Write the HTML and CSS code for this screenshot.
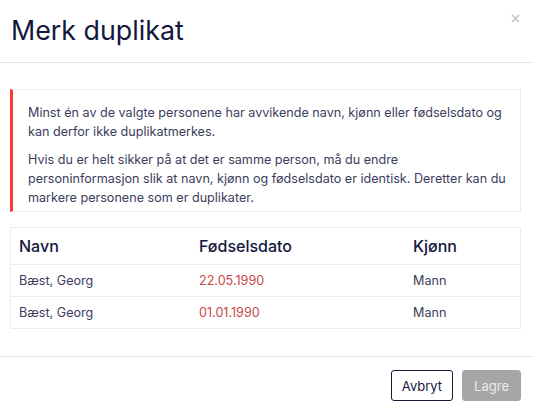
FILE: index.html
```html
<!DOCTYPE html>
<html lang="no">
<head>
  <meta charset="UTF-8">
  <title>Merk duplikat</title>
  <meta name="viewport" content="width=device-width, initial-scale=1.0">
  <link rel="stylesheet" href="styles.css">
</head>
<body>
  <div class="modal">
    <div class="modal-header">
      <h2 class="modal-title">Merk duplikat</h2>
      <button class="close" aria-label="Lukk">
        <svg width="9" height="9" viewBox="0 0 9 9"><path d="M1 1L8 8M8 1L1 8" stroke="#c4c4c4" stroke-width="1.6"/></svg>
      </button>
    </div>
    <div class="modal-body">
      <div class="alert">
        <p>Minst én av de valgte personene har avvikende navn, kjønn eller fødselsdato og kan derfor ikke duplikatmerkes.</p>
        <p>Hvis du er helt sikker på at det er samme person, må du endre personinformasjon slik at navn, kjønn og fødselsdato er identisk. Deretter kan du markere personene som er duplikater.</p>
      </div>
      <table class="persons">
        <thead>
          <tr>
            <th class="col-name">Navn</th>
            <th class="col-date">Fødselsdato</th>
            <th>Kjønn</th>
          </tr>
        </thead>
        <tbody>
          <tr>
            <td>Bæst, Georg</td>
            <td class="mismatch">22.05.1990</td>
            <td>Mann</td>
          </tr>
          <tr>
            <td>Bæst, Georg</td>
            <td class="mismatch">01.01.1990</td>
            <td>Mann</td>
          </tr>
        </tbody>
      </table>
    </div>
    <div class="modal-footer">
      <button class="btn btn-outline">Avbryt</button>
      <button class="btn btn-disabled" disabled>Lagre</button>
    </div>
  </div>
</body>
</html>
```

FILE: styles.css
```css
body {
  margin: 0;
  background: #fff;
  font-family: Inter, 'Noto Sans', Arial, sans-serif;
  color: #3b3d5c;
}
.modal {
  width: 533px;
  height: 411px;
  display: flex;
  flex-direction: column;
}
.modal-header {
  display: flex;
  justify-content: space-between;
  align-items: flex-start;
  padding: 15px 13px 16px 11px;
  border-bottom: 1px solid #e6e6e6;
}
.modal-title {
  margin: 0;
  font-size: 26.8px;
  line-height: 31px;
  font-weight: 400;
  color: #14173d;
}
.close {
  background: none;
  border: none;
  padding: 0;
  margin-top: -1px;
  cursor: pointer;
  line-height: 0;
}
.modal-body {
  padding: 26px 12px 0 10px;
}
.alert {
  border: 1px solid #ececec;
  border-left: 3px solid #ff3b30;
  padding: 13px 12px 4px 15px;
  font-size: 12.6px;
  line-height: 19px;
  color: #3b3d5c;
}
.alert p {
  margin: 0 0 9px 0;
}
.alert p:last-child {
  margin-bottom: 0;
}
.persons {
  width: 100%;
  margin-top: 15px;
  border-collapse: collapse;
  border: 1px solid #ececec;
}
.persons th {
  text-align: left;
  font-size: 16px;
  font-weight: 500;
  color: #14173d;
  height: 36px;
  padding: 0 8px;
  border-bottom: 1px solid #ececec;
}
.persons td {
  font-size: 12.6px;
  height: 31px;
  padding: 0 8px;
  border-bottom: 1px solid #ececec;
  color: #3b3d5c;
}
.col-name {
  width: 164px;
}
.col-date {
  width: 198px;
}
.persons td.mismatch {
  color: #c6474a;
}
.modal-footer {
  margin-top: auto;
  display: flex;
  justify-content: flex-end;
  gap: 9px;
  padding: 13px 12px 10px 12px;
  border-top: 1px solid #e6e6e6;
}
.btn {
  font-family: inherit;
  font-size: 13px;
  height: 31px;
  padding: 0 10px;
  border-radius: 3px;
  cursor: pointer;
}
.btn-outline {
  background: #fff;
  color: #14173d;
  border: 1.5px solid #14173d;
}
.btn-disabled {
  background: #a6a6a6;
  color: #ececec;
  border: 1px solid #a6a6a6;
  padding: 0 11px;
  cursor: default;
}
```
